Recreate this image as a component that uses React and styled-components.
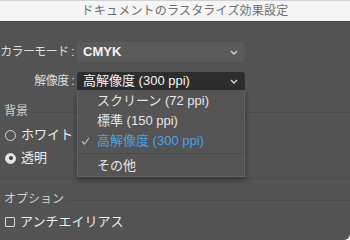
import React from "react";
import styled, { createGlobalStyle } from "styled-components";

const Global = createGlobalStyle`
  html, body { margin: 0; padding: 0; background: #ffffff; }
  body { font-family: "Noto Sans CJK JP", "Liberation Sans", sans-serif; }
`;

const JP = `"Liberation Sans", "Noto Sans CJK JP", sans-serif`;

const Window = styled.div`
  width: 350px;
  height: 240px;
  background: #535353;
  overflow: hidden;
  border-bottom-right-radius: 6px;
  display: flex;
  flex-direction: column;
  font-family: ${JP};
  line-height: 16px;
`;

const TitleBar = styled.div`
  height: 20px;
  flex: none;
  background: #f5f5f5;
  border-top: 1px solid #d2d2d2;
  border-bottom: 1px solid #444;
  display: flex;
  align-items: center;
  justify-content: center;
  padding-left: 20px;
  font-size: 12px;
  color: #6e6e6e;
  letter-spacing: 0.2px;
`;

const Body = styled.div`
  display: flex;
  flex-direction: column;
  padding-top: 20px;
`;

const FormRow = styled.div`
  display: grid;
  grid-template-columns: 74px 168px;
  column-gap: 3px;
  align-items: center;
  margin-top: ${(p) => p.$top || 0}px;
`;

const Label = styled.div`
  justify-self: end;
  white-space: nowrap;
  font-size: 12px;
  letter-spacing: -0.6px;
  color: #dcdcdc;
`;

const Select = styled.div`
  position: relative;
  height: ${(p) => (p.$open ? 18 : 20)}px;
  border-radius: ${(p) => (p.$open ? "3px 3px 0 0" : "4px")};
  background: ${(p) => (p.$open ? "#2d2d2d" : "#5a5a5a")};
  display: flex;
  align-items: center;
  justify-content: space-between;
  padding: 0 7px 0 6px;
  font-size: 13px;
  font-weight: ${(p) => (p.$open ? 400 : 600)};
  color: #f4f4f4;
`;

const Chevron = () => (
  <svg width="8" height="5" viewBox="0 0 8 5">
    <path d="M1 1 L4 4 L7 1" fill="none" stroke="#d8d8d8" strokeWidth="1.4" />
  </svg>
);

const Menu = styled.div`
  position: absolute;
  left: 0;
  top: 18px;
  width: 168px;
  box-sizing: border-box;
  background: #545454;
  border: 1px solid #626262;
  border-top: none;
  box-shadow: 0 3px 6px rgba(0, 0, 0, 0.35);
  padding: 1px 0 0;
  z-index: 2;
  font-weight: 400;
`;

const Item = styled.div`
  height: 20px;
  display: flex;
  align-items: center;
  padding-left: 19px;
  position: relative;
  font-size: 13px;
  color: ${(p) => (p.$active ? "#4aa1ea" : "#e6e6e6")};
`;

const Check = styled.svg`
  position: absolute;
  left: 3px;
  top: 6px;
`;

const MenuSep = styled.div`
  height: 1px;
  background: #4a4a4a;
  margin: 2px 0 2px;
`;

const GroupHeader = styled.div`
  display: flex;
  align-items: center;
  gap: 4px;
  margin-top: ${(p) => p.$top || 0}px;
  padding-left: 4px;
  font-size: 12px;
  color: #cfcfcf;
  &::after {
    content: "";
    flex: 1;
    height: 1px;
    background: #4b4b4b;
    margin-top: 2px;
  }
`;

const Divider = styled.div`
  height: 1px;
  background: #4c4c4c;
  margin-top: ${(p) => p.$top || 0}px;
`;

const OptionRow = styled.div`
  display: flex;
  align-items: center;
  gap: 5px;
  padding-left: 5px;
  margin-top: ${(p) => p.$top || 0}px;
  font-size: 13px;
  font-weight: 400;
  color: #ededed;
`;

const Radio = styled.span`
  width: 11px;
  height: 11px;
  box-sizing: border-box;
  border-radius: 50%;
  border: 1px solid #dadada;
  background: ${(p) => (p.$on ? "#e6e6e6" : "transparent")};
  display: flex;
  align-items: center;
  justify-content: center;
  &::after {
    content: "";
    width: 4px;
    height: 4px;
    border-radius: 50%;
    background: ${(p) => (p.$on ? "#3a3a3a" : "transparent")};
  }
`;

const Box = styled.span`
  width: 10px;
  height: 10px;
  box-sizing: border-box;
  border: 1px solid #dadada;
  border-radius: 1px;
`;

export default function App() {
  return (
    <>
      <Global />
      <Window>
        <TitleBar>ドキュメントのラスタライズ効果設定</TitleBar>
        <Body>
          <FormRow>
            <Label>カラーモード :</Label>
            <Select>
              <span>CMYK</span>
              <Chevron />
            </Select>
          </FormRow>
          <FormRow $top={10}>
            <Label>解像度 :</Label>
            <Select $open>
              <span>高解像度 (300 ppi)</span>
              <Chevron />
              <Menu>
                <Item>スクリーン (72 ppi)</Item>
                <Item>標準 (150 ppi)</Item>
                <Item $active>
                  <Check width="9" height="8" viewBox="0 0 9 8">
                    <path d="M1 4.5 L3.5 7 L8 1" fill="none" stroke="#bdbdbd" strokeWidth="1.2" />
                  </Check>
                  高解像度 (300 ppi)
                </Item>
                <MenuSep />
                <Item>その他</Item>
              </Menu>
            </Select>
          </FormRow>
          <GroupHeader $top={13}>背景</GroupHeader>
          <OptionRow $top={8}>
            <Radio />
            ホワイト
          </OptionRow>
          <OptionRow $top={7}>
            <Radio $on />
            透明
          </OptionRow>
          <Divider $top={12} />
          <GroupHeader $top={12}>オプション</GroupHeader>
          <OptionRow $top={7}>
            <Box />
            アンチエイリアス
          </OptionRow>
        </Body>
      </Window>
    </>
  );
}
